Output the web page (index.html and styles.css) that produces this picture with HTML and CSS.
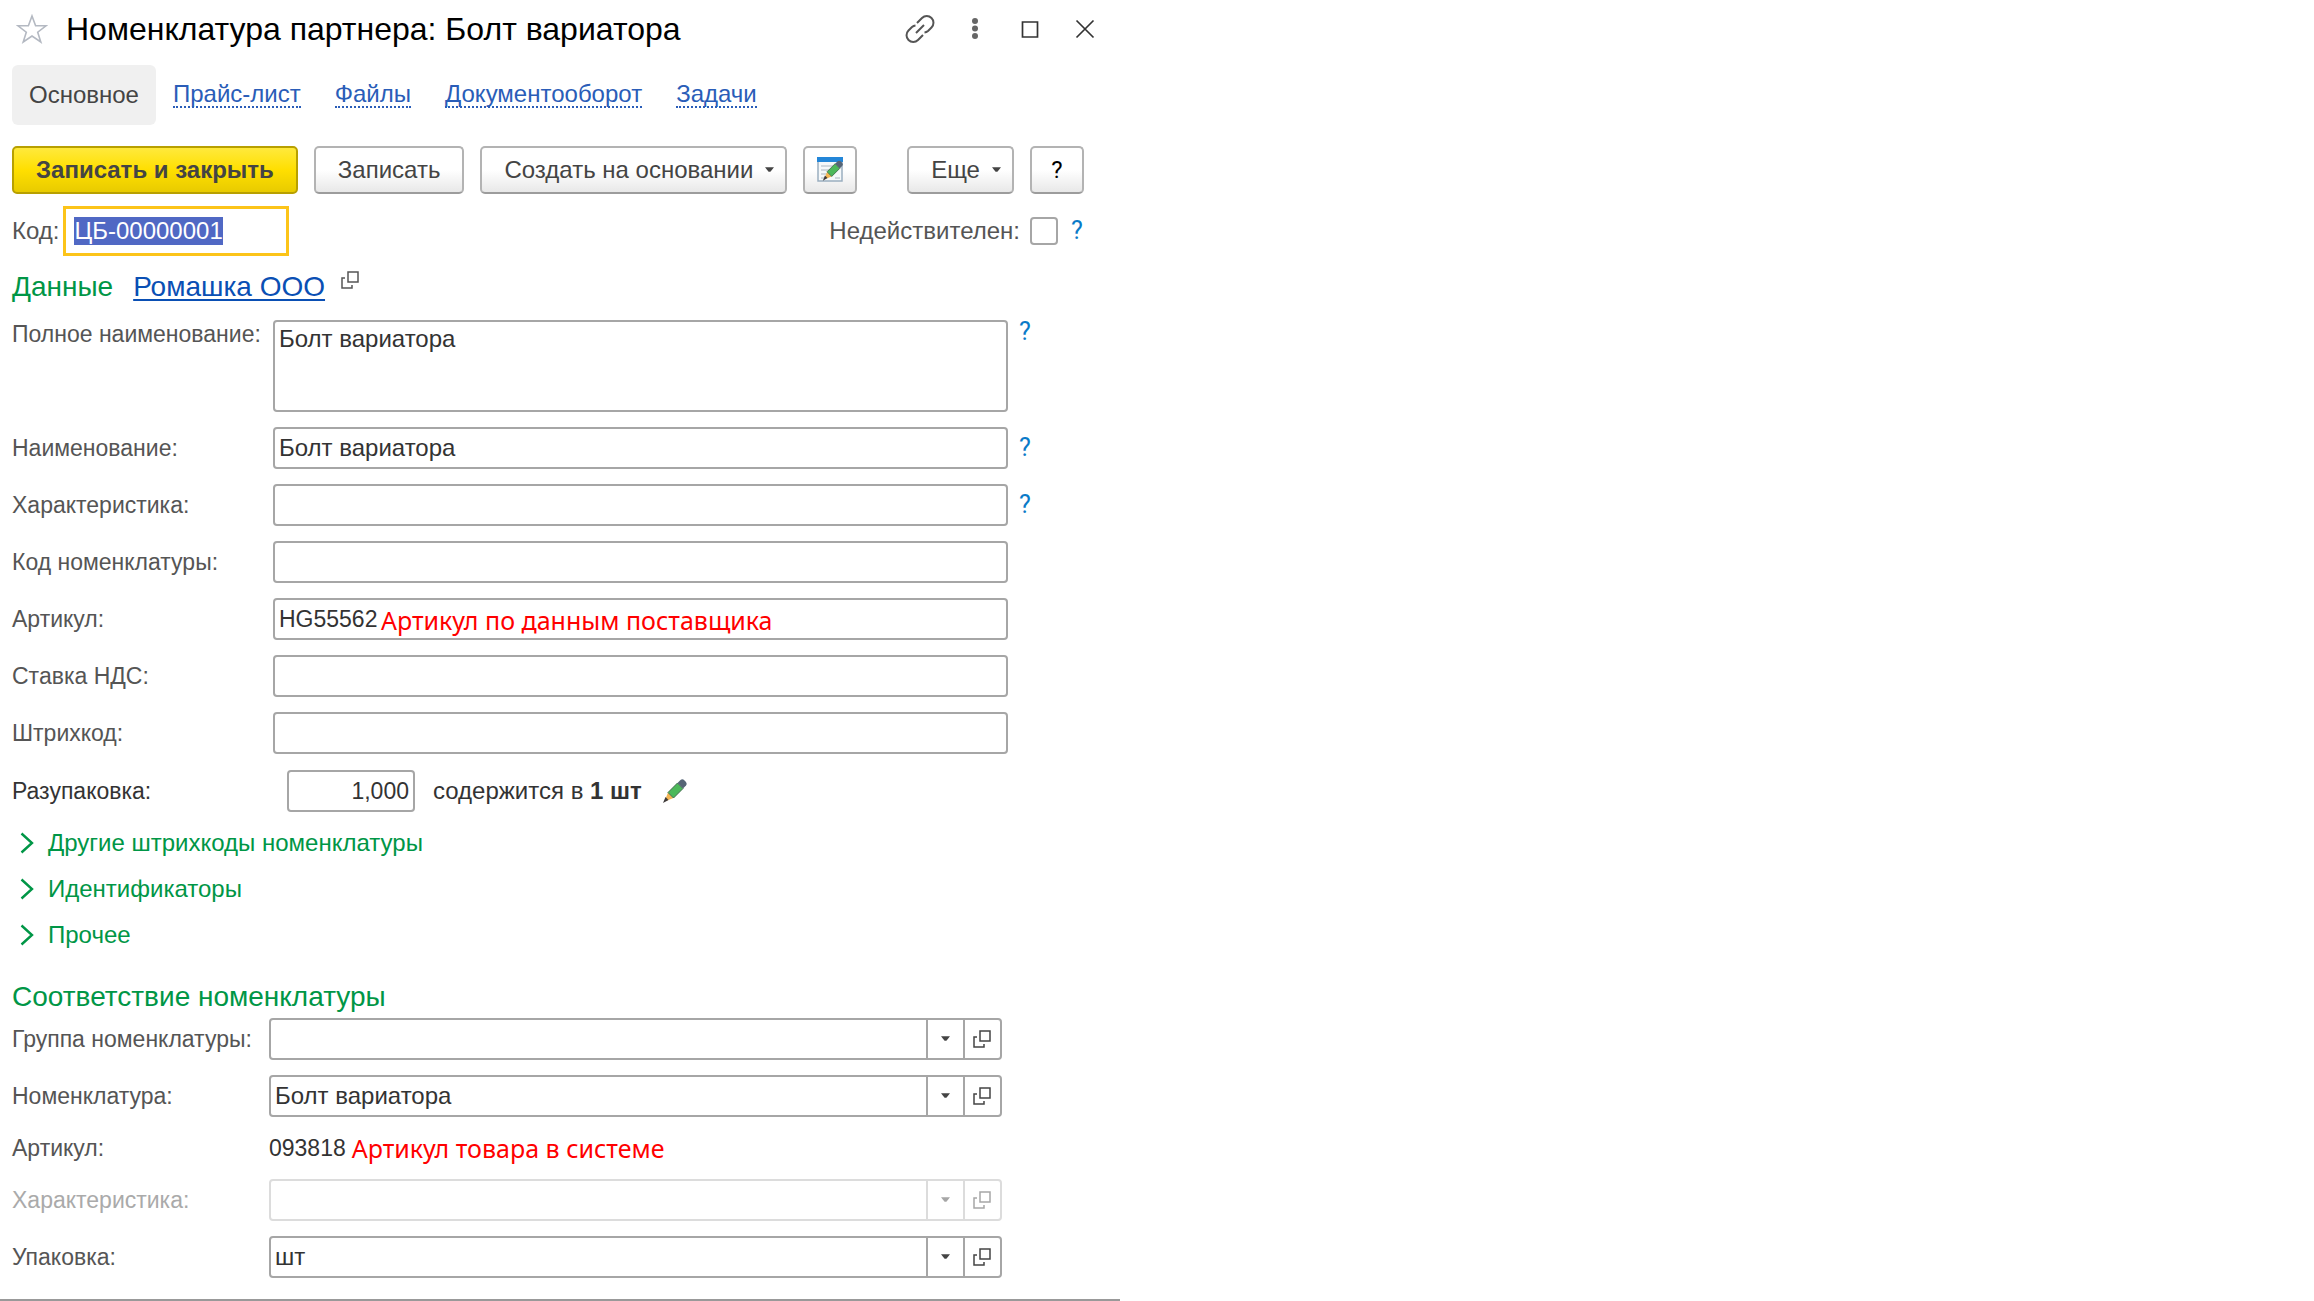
FILE: index.html
```html
<!DOCTYPE html>
<html lang="ru">
<head>
<meta charset="utf-8">
<meta name="viewport" content="width=device-width, initial-scale=1">
<title>Номенклатура партнера: Болт вариатора</title>
<link rel="stylesheet" href="styles.css">
</head>
<body>
<svg class="sprite" aria-hidden="true">
  <symbol id="open" viewBox="0 0 18 18"><path d="M7 1h10v10H7zM4 7H1v10h10v-3" fill="none" stroke="currentColor" stroke-width="1.5"/></symbol>
  <symbol id="caret" viewBox="0 0 10 6"><path d="M0 0h10L6 5H4z" fill="currentColor"/></symbol>
  <symbol id="chevron" viewBox="0 0 14 22"><path d="M1.500 1.500 12 11 1.500 20.500" fill="none" stroke="currentColor" stroke-width="2.400"/></symbol>
  <symbol id="pencil" viewBox="0 0 26 26"><path d="M2.500 23.500 6 14.500l5.500 5.500z" fill="#f4b552"/><path d="M1 25l2.500-6 3 3z" fill="#3d3a3a"/><path d="M6 14.500 15.500 5l5.500 5.500L11.500 20z" fill="#4cb85a" stroke="#3f6b4c" stroke-width="1"/><path d="M15.500 5 18.500 2q2-1.500 4 .5l1.500 1.500q1.500 2 0 3.500L21 10.500z" fill="#566576"/></symbol>
</svg>
<main class="form-window">
  <header class="titlebar">
    <button class="icon-btn star" type="button" aria-label="В избранное"><svg width="32" height="30" viewBox="0 0 32 30"><path d="M16 2l3.600 9.800H30l-8.300 6.400L24.800 28 16 22l-8.800 6 3.100-9.800L2 11.800h10.400z" fill="none" stroke="#b4b9c2" stroke-width="1.600"/></svg></button>
    <h1>Номенклатура партнера: Болт вариатора</h1>
    <div class="window-tools">
      <button class="icon-btn" type="button" aria-label="Ссылка"><svg width="30" height="30" viewBox="0 0 30 30" fill="none" stroke="#555" stroke-width="2"><path d="M12 9l5-5a6.700 6.700 0 0 1 9.500 9.500l-3.500 3.500q-1.500 1.300-3.500 1.500M18 21l-5 5A6.700 6.700 0 0 1 3.500 16.500L7 13q1.500-1.300 3.500-1.500M11 19l8-8"/></svg></button>
      <button class="icon-btn" type="button" aria-label="Меню"><svg width="30" height="30" viewBox="0 0 30 30" fill="#666"><circle cx="15" cy="7" r="3"/><circle cx="15" cy="14.500" r="3"/><circle cx="15" cy="22" r="3"/></svg></button>
      <button class="icon-btn" type="button" aria-label="Развернуть"><svg width="30" height="30" viewBox="0 0 30 30"><path d="M7.500 8h15v15h-15z" fill="none" stroke="#333" stroke-width="1.700"/></svg></button>
      <button class="icon-btn" type="button" aria-label="Закрыть"><svg width="30" height="30" viewBox="0 0 30 30"><path d="M6.500 6.500l17 17M23.500 6.500l-17 17" fill="none" stroke="#333" stroke-width="1.700"/></svg></button>
    </div>
  </header>

  <nav class="tabs">
    <a class="current" href="#main" aria-current="page">Основное</a>
    <a href="#prices"><span>Прайс-лист</span></a>
    <a href="#files"><span>Файлы</span></a>
    <a href="#docs"><span>Документооборот</span></a>
    <a href="#tasks"><span>Задачи</span></a>
  </nav>

  <div class="toolbar">
    <button class="btn primary" type="button">Записать и закрыть</button>
    <button class="btn" type="button">Записать</button>
    <button class="btn menu" type="button">Создать на основании<svg class="caret"><use href="#caret"/></svg></button>
    <button class="btn square" type="button" aria-label="Редактировать"><svg width="27" height="26" viewBox="0 0 27 26"><path d="M1 1h24v23H1z" fill="#f5f8fa" stroke="#9aaec0" stroke-width="1.500"/><path d="M0 0h26v5H0z" fill="#2386d8"/><path d="M4 9h13M4 13h10M4 17h6M4 21h5M18 21h5" stroke="#c3ccd4" stroke-width="1.500"/><use href="#pencil" x="5" y="2" width="22" height="23"/></svg></button>
    <button class="btn menu more" type="button">Еще<svg class="caret"><use href="#caret"/></svg></button>
    <button class="btn square help-btn" type="button" aria-label="Справка">?</button>
  </div>

  <div class="code-row">
    <label for="code">Код:</label>
    <input id="code" class="code" type="text" value="ЦБ-00000001" autofocus>
    <label class="invalid" for="invalid">Недействителен:</label>
    <input id="invalid" class="check" type="checkbox">
    <button class="help" type="button" aria-label="Подсказка">?</button>
  </div>

  <div class="section-head">
    <h2>Данные</h2>
    <a href="#partner">Ромашка ООО</a>
    <button class="icon-btn open-partner" type="button" aria-label="Открыть"><svg class="open"><use href="#open"/></svg></button>
  </div>

  <section class="fields partner">
    <div class="row tall"><label for="full">Полное наименование:</label><textarea id="full" class="field">Болт вариатора</textarea><button class="help" type="button" aria-label="Подсказка">?</button></div>
    <div class="row"><label for="name">Наименование:</label><input id="name" class="field" type="text" value="Болт вариатора"><button class="help" type="button" aria-label="Подсказка">?</button></div>
    <div class="row"><label for="char">Характеристика:</label><input id="char" class="field" type="text"><button class="help" type="button" aria-label="Подсказка">?</button></div>
    <div class="row"><label for="ncode">Код номенклатуры:</label><input id="ncode" class="field" type="text"></div>
    <div class="row"><label for="art">Артикул:</label><div class="noted"><input id="art" class="field number" type="text" value="HG55562"><span class="note">Артикул по данным поставщика</span></div></div>
    <div class="row"><label for="vat">Ставка НДС:</label><input id="vat" class="field" type="text"></div>
    <div class="row"><label for="barcode">Штрихкод:</label><input id="barcode" class="field" type="text"></div>
    <div class="row unpack"><label for="qty">Разупаковка:</label><div class="unpack-body"><input id="qty" class="field number qty" type="text" value="1,000"><span>содержится в <b>1 шт</b></span><button class="icon-btn" type="button" aria-label="Изменить"><svg width="26" height="26"><use href="#pencil"/></svg></button></div></div>
  </section>

  <div class="groups">
    <button type="button"><svg><use href="#chevron"/></svg>Другие штрихкоды номенклатуры</button>
    <button type="button"><svg><use href="#chevron"/></svg>Идентификаторы</button>
    <button type="button"><svg><use href="#chevron"/></svg>Прочее</button>
  </div>

  <h2 class="match-head">Соответствие номенклатуры</h2>
  <section class="fields match">
    <div class="row"><label for="group">Группа номенклатуры:</label><div class="combo"><select id="group"><option></option></select><span class="arrow"><svg class="caret"><use href="#caret"/></svg></span><button type="button" aria-label="Открыть"><svg class="open"><use href="#open"/></svg></button></div></div>
    <div class="row"><label for="item">Номенклатура:</label><div class="combo"><select id="item"><option>Болт вариатора</option></select><span class="arrow"><svg class="caret"><use href="#caret"/></svg></span><button type="button" aria-label="Открыть"><svg class="open"><use href="#open"/></svg></button></div></div>
    <div class="row plain"><span class="label">Артикул:</span><div class="value"><span class="number">093818</span><span class="note">Артикул товара в системе</span></div></div>
    <div class="row off"><label for="item-char">Характеристика:</label><div class="combo"><select id="item-char" disabled><option></option></select><span class="arrow"><svg class="caret"><use href="#caret"/></svg></span><button type="button" aria-label="Открыть" disabled><svg class="open"><use href="#open"/></svg></button></div></div>
    <div class="row"><label for="pack">Упаковка:</label><div class="combo"><select id="pack"><option>шт</option></select><span class="arrow"><svg class="caret"><use href="#caret"/></svg></span><button type="button" aria-label="Открыть"><svg class="open"><use href="#open"/></svg></button></div></div>
  </section>
</main>
<script src="form.js"></script>
</body>
</html>
```
FILE: styles.css
```css
* { box-sizing: border-box; }

body {
  margin: 0;
  background: #fff;
  color: #333;
  font: 24px/28px "Liberation Sans", Arial, sans-serif;
}

button, input, select, textarea {
  margin: 0;
  font: inherit;
  color: inherit;
}

button { padding: 0; cursor: pointer; }
h1, h2 { margin: 0; font-weight: 400; }
.sprite { display: none; }
svg { display: block; flex: none; }
.caret { width: 9px; height: 6px; }
.open { width: 18px; height: 18px; }

.form-window {
  width: 48.4%;
  min-width: 1110px;
  padding-left: 12px;
  border-bottom: 2px solid #999;
}

.icon-btn { border: 0; background: none; }

.titlebar {
  display: flex;
  align-items: center;
  height: 65px;
  padding-bottom: 7px;
}
.star { margin: 0 18px 0 4px; }
.titlebar h1 { flex: 1; font-size: 32px; line-height: 40px; color: #000; }
.window-tools { display: flex; gap: 25px; padding-right: 20px; }

.tabs { display: flex; }
.tabs a {
  display: flex;
  align-items: center;
  height: 60px;
  padding: 0 17px;
  color: #2a5db8;
  text-decoration: none;
}
.tabs span { line-height: 24px; border-bottom: 2px dotted #2a5db8; }
.tabs .current { border-radius: 6px; background: #f0f0f0; color: #444; }

.toolbar { display: flex; gap: 16px; padding: 21px 36px 12px 0; }
.btn {
  height: 48px;
  padding: 0 22px;
  border: 2px solid #b3b3b3;
  border-bottom-color: #9c9c9c;
  border-radius: 5px;
  background: linear-gradient(#fff 50%, #e8e8e8);
  color: #444;
  white-space: nowrap;
}
.btn.primary {
  border-color: #b8a000;
  background: linear-gradient(#ffe93c, #ffdf00 50%, #e8cb00);
  font-weight: 700;
}
.btn.menu { display: flex; align-items: center; gap: 12px; padding-right: 11px; }
.btn.square {
  display: flex;
  align-items: center;
  justify-content: center;
  width: 54px;
  padding: 0;
}
.btn.more { margin-left: auto; }
.btn.help-btn { font: 24px/28px Roboto, sans-serif; color: #000; }

.code-row {
  display: flex;
  align-items: center;
  padding-right: 36px;
  color: #555;
}
.code {
  width: 226px;
  height: 50px;
  margin-left: 4px;
  padding: 0 8px;
  border: 3px solid #fcc419;
  background: #fff;
  color: #333;
  outline: 0;
}
.code::selection { background: #5068c4; color: #fff; }
.invalid { margin-left: auto; }
.check {
  appearance: none;
  width: 28px;
  height: 28px;
  margin: 0 12px 0 10px;
  border: 2px solid #a6a6a6;
  border-radius: 4px;
}
.help {
  width: 14px;
  border: 0;
  background: none;
  color: #0a7ac8;
  font: 25px/28px Roboto, sans-serif;
}

h2, .section-head a { font-size: 28px; line-height: 32px; }
h2 { color: #009646; }
.section-head { display: flex; gap: 20px; padding: 15px 0 17px; }
.section-head a {
  color: #0a4fb4;
  text-decoration: underline 2px;
  text-underline-offset: 3px;
}
.open-partner { align-self: flex-start; margin-left: -4px; color: #555; }

.fields { display: grid; gap: 15px; }
.row {
  display: grid;
  align-items: center;
  grid-template-columns: 261px minmax(0, 1fr) 112px;
}
.row label, .label, .number { font-size: 23px; }
.row label, .label { color: #555; white-space: nowrap; }
.field {
  display: block;
  width: 100%;
  height: 42px;
  padding: 0 4px;
  border: 2px solid #a6a6a6;
  border-radius: 4px;
  background: #fff;
}
textarea.field { height: 92px; padding-top: 3px; resize: none; }
.row.tall { align-items: start; }
.row .help { margin-left: 10px; }
.tall .help { line-height: 24px; }
.noted { position: relative; }
.note { color: #f00; font-family: "Noto Sans", sans-serif; font-size: 25px; white-space: nowrap; }
.noted .note { position: absolute; left: 108px; top: 8px; }
.unpack { padding-top: 1px; }
.unpack label { color: #333; }
.unpack-body { display: flex; align-items: center; padding-left: 14px; }
.qty { width: 128px; margin-right: 18px; text-align: right; }
.unpack-body .icon-btn { margin-left: 20px; }

.groups { display: grid; justify-items: start; padding: 8px 0 23px; }
.groups button {
  display: flex;
  align-items: center;
  gap: 14px;
  height: 46px;
  padding-left: 8px;
  border: 0;
  background: none;
  color: #009646;
}
.groups svg { width: 14px; height: 22px; }

.match { padding: 5px 0 21px; }
.match .row { grid-template-columns: 257px minmax(0, 1fr) 118px; }
.match .plain { height: 32px; }
.value { display: flex; gap: 6px; }
.combo {
  position: relative;
  display: flex;
  height: 42px;
  border: 2px solid #a6a6a6;
  border-radius: 4px;
  color: #444;
}
.combo select {
  flex: 1;
  min-width: 0;
  padding: 0 40px 0 4px;
  border: 0;
  appearance: none;
  background: none;
  color: #333;
}
.arrow {
  position: absolute;
  inset: 0 36px 0 auto;
  display: grid;
  place-items: center;
  width: 38px;
  border-left: 2px solid #a6a6a6;
  pointer-events: none;
}
.combo button {
  display: grid;
  place-items: center;
  width: 37px;
  border: 0;
  border-left: 2px solid #a6a6a6;
  background: none;
}
.off label { color: #aaa; }
.off .combo, .off .arrow, .off button { border-color: #dcdcdc; color: #a6a6a6; }
```
FILE: form.js
```js
const code = document.getElementById("code");
code.focus();
code.select();
```
